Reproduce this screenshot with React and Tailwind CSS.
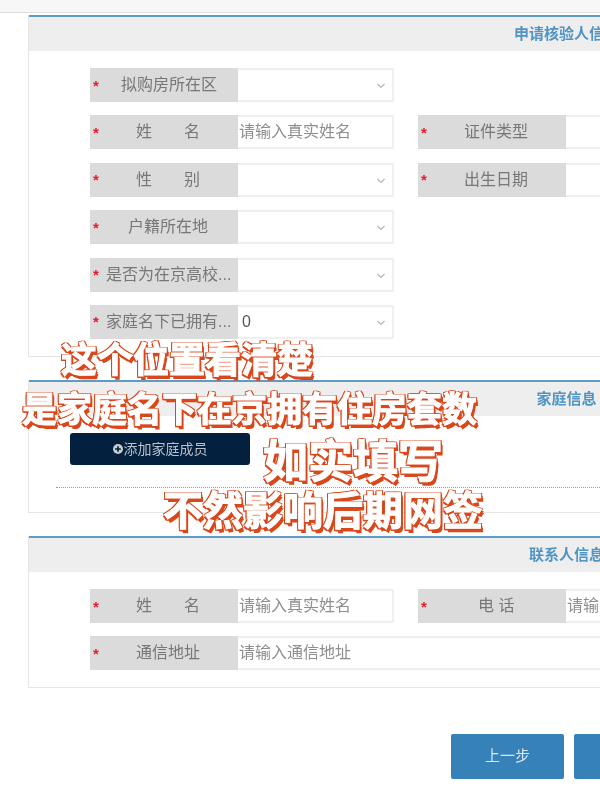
const cjk = "font-['Liberation_Sans','Noto_Sans_CJK_SC',sans-serif]";

function Chevron() {
  return (
    <svg width="10" height="6" viewBox="0 0 10 6" className="absolute right-[6px] top-1/2 -mt-[2px]" fill="none" stroke="#b4b4b4" strokeWidth="1.2">
      <path d="M1.5 1l3.5 3.5L8.500 1" />
    </svg>
  );
}

function Field({ label, labelClass = "", value, placeholder, select, wide, cut }) {
  const width = wide ? "w-[560px]" : cut ? "w-[320px]" : "w-[304px]";
  return (
    <div className={`flex h-[34px] shrink-0 ${width}`}>
      <div className="flex w-[148px] shrink-0 items-center bg-[#dbdbdb] pl-[3px] text-[#777]">
        <span className="w-[13px] shrink-0 text-[15px] font-bold leading-none text-[#e8192c]">*</span>
        <span className={`flex-1 whitespace-nowrap text-[16px] ${labelClass}`}>{label}</span>
      </div>
      <div className="relative flex flex-1 items-center border-2 border-l-0 border-[#f0f0f0] bg-white pl-[1px] text-[16px]">
        {placeholder && <span className="whitespace-nowrap text-[#8e8e8e]">{placeholder}</span>}
        {value && <span className="pl-[3px] text-[#555]">{value}</span>}
        {select && <Chevron />}
      </div>
    </div>
  );
}

function Panel({ title, children, className = "" }) {
  return (
    <section className={`w-[1077px] shrink-0 border border-t-0 border-[#e5e5e5] bg-white ${className}`}>
      <div className="flex h-[36px] items-center justify-center border-t-2 border-[#5f9cc5] bg-[#eeeeee] text-[15px] font-bold text-[#4f94c3]">
        {title}
      </div>
      {children}
    </section>
  );
}

function Caption({ className, children }) {
  return (
    <div
      className={`absolute whitespace-nowrap font-bold leading-none text-white [-webkit-text-stroke:1px_#ffffff] [text-shadow:-1.5px_0_0_#d9481c,1.5px_0_0_#d9481c,0_-1.5px_0_#d9481c,0_1.5px_0_#d9481c,-1.5px_-1.5px_0_#d9481c,1.5px_-1.5px_0_#d9481c,-1.5px_1.5px_0_#d9481c,1.5px_1.5px_0_#d9481c,2px_2px_0_#d9481c,2.5px_3.5px_0_#d9481c] ${className}`}
    >
      {children}
    </div>
  );
}

export default function App() {
  return (
    <div className={`relative h-[799px] w-[600px] overflow-hidden bg-white blur-[0.4px] ${cjk}`}>
      <div className="box-content h-[12px] border-b border-[#dcdfe4] bg-[#f7f7f7]" />

      <div className="flex flex-col pl-[28px] pt-[2px]">
        <Panel title="申请核验人信息" className="h-[342px]">
          <div className="flex flex-col gap-[13.4px] pl-[61px] pt-[17px]">
            <Field label="拟购房所在区" labelClass="pl-[15px]" select />
            <div className="flex gap-[24px]">
              <Field label="姓　　名" labelClass="pl-[30px]" placeholder="请输入真实姓名" />
              <Field label="证件类型" labelClass="pl-[30px]" cut />
            </div>
            <div className="flex gap-[24px]">
              <Field label="性　　别" labelClass="pl-[30px]" select />
              <Field label="出生日期" labelClass="pl-[30px]" cut />
            </div>
            <Field label="户籍所在地" labelClass="pl-[22px]" select />
            <Field label="是否为在京高校..." select />
            <Field label="家庭名下已拥有..." value="0" select />
          </div>
        </Panel>

        <Panel title="家庭信息" className="mt-[23px] h-[133px]">
          <div className="pl-[41px] pt-[17px]">
            <button type="button" className="flex h-[32px] w-[180px] items-center justify-center gap-[1px] rounded-[3px] bg-[#03203f] text-[14px] text-[#b9c2cc]">
              <svg width="10" height="10" viewBox="0 0 10 10">
                <circle cx="5" cy="5" r="5" fill="#c6ccd3" />
                <path d="M5 2.2v5.6M2.2 5h5.6" stroke="#03203f" strokeWidth="1.6" />
              </svg>
              添加家庭成员
            </button>
          </div>
          <div className="ml-[27px] mt-[22px] border-t border-dotted border-[#9a9a9a]" />
        </Panel>

        <Panel title="联系人信息" className="mt-[23px] h-[152px]">
          <div className="flex flex-col gap-[13.4px] pl-[61px] pt-[17px]">
            <div className="flex gap-[24px]">
              <Field label="姓　　名" labelClass="pl-[30px]" placeholder="请输入真实姓名" />
              <Field label="电 话" labelClass="pl-[44px]" placeholder="请输入手机号码" cut />
            </div>
            <Field label="通信地址" labelClass="pl-[30px]" placeholder="请输入通信地址" wide />
          </div>
        </Panel>

        <div className="mt-[46px] flex gap-[10px] pl-[423px]">
          <button type="button" className="h-[45px] w-[113px] shrink-0 rounded-[2px] bg-[#3581b8] text-[15px] text-[#d7e6f1]">上一步</button>
          <button type="button" className="h-[45px] w-[113px] shrink-0 rounded-[2px] bg-[#3581b8]" />
        </div>
      </div>

      <Caption className="left-[61px] top-[343px] text-[36px]">这个位置看清楚</Caption>
      <Caption className="left-[22px] top-[392px] text-[35px]">是家庭名下在京拥有住房套数</Caption>
      <Caption className="left-[263px] top-[440px] text-[45px]">如实填写</Caption>
      <Caption className="left-[163px] top-[491px] text-[40px]">不然影响后期网签</Caption>
    </div>
  );
}
